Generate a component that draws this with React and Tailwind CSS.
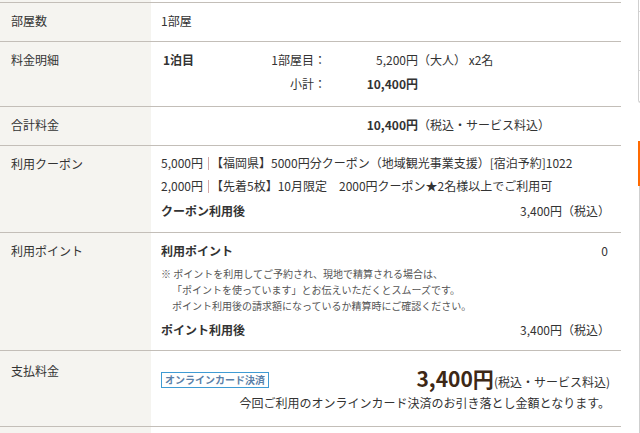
import React from 'react';

const font = { fontFamily: '"Noto Sans CJK JP", "Noto Sans", sans-serif' };

function Row({ label, h, labelPt = 'pt-[10px]', children }) {
  return (
    <div className={`flex border-t border-[#c3beb8] ${h}`}>
      <div className={`w-[151px] shrink-0 bg-[#f5f4f0] pl-[11px] text-[12px] leading-[16px] text-[#333] ${labelPt}`}>
        {label}
      </div>
      <div className="flex-1 pl-[10px] pr-[11px] text-[12px] leading-[16px] text-[#333]">{children}</div>
    </div>
  );
}

function Sep() {
  return <span className="inline-block w-px h-[13px] bg-[#d3a9a9] ml-[5px] mr-[2px] align-[-2px]" />;
}

export default function App() {
  return (
    <div className="flex w-[640px] h-[433px] overflow-hidden bg-white" style={font}>
      {/* main table */}
      <div className="w-[621px] shrink-0">
        <div className="h-[2px] w-[151px] bg-[#f5f4f0]" />

        <Row label="部屋数" h="h-[39px]">
          <div className="pt-[10px]">1部屋</div>
        </Row>

        <Row label="料金明細" h="h-[65px]">
          <div className="flex pt-[10px]">
            <div className="w-[82px] pl-[2px] font-bold">1泊目</div>
            <div className="grid grid-cols-[83px_92px_auto] gap-y-[8px]">
              <div className="text-right">1部屋目：</div>
              <div className="text-right">5,200円</div>
              <div>（大人） x2名</div>
              <div className="text-right">小計：</div>
              <div className="text-right font-bold">10,400円</div>
              <div />
            </div>
          </div>
        </Row>

        <Row label="合計料金" h="h-[39px]">
          <div className="flex pt-[10px]">
            <div className="w-[165px]" />
            <div className="w-[92px] text-right font-bold">10,400円</div>
            <div>（税込・サービス料込）</div>
          </div>
        </Row>

        <Row label="利用クーポン" h="h-[87px]">
          <div className="pt-[9px]">
            <div>
              5,000円<Sep />【福岡県】5000円分クーポン（地域観光事業支援）[宿泊予約]1022
            </div>
            <div className="mt-[7px]">
              2,000円<Sep />【先着5枚】10月限定　2000円クーポン★2名様以上でご利用可
            </div>
            <div className="mt-[9px] flex justify-between">
              <span className="font-bold">クーポン利用後</span>
              <span>3,400円（税込）</span>
            </div>
          </div>
        </Row>

        <Row label="利用ポイント" h="h-[118px]">
          <div className="pt-[10px]">
            <div className="flex justify-between">
              <span className="font-bold">利用ポイント</span>
              <span className="pr-[2px]">0</span>
            </div>
            <div className="mt-[7px] text-[10px] leading-[16px] text-[#555]">
              <div>※ ポイントを利用してご予約され、現地で精算される場合は、</div>
              <div className="pl-[11px]">「ポイントを使っています」とお伝えいただくとスムーズです。</div>
              <div className="pl-[11px]">ポイント利用後の請求額になっているか精算時にご確認ください。</div>
            </div>
            <div className="mt-[8px] flex justify-between">
              <span className="font-bold">ポイント利用後</span>
              <span>3,400円（税込）</span>
            </div>
          </div>
        </Row>

        <Row label="支払料金" h="h-[76px]" labelPt="pt-[12px]">
          <div className="pt-[14px]">
            <div className="flex items-end justify-between">
              <span className="mb-[3px] border border-[#3f9bd3] px-[3px] text-[10px] leading-[14px] font-bold text-[#5a7fa8]">
                オンラインカード決済
              </span>
              <span className="flex items-baseline">
                <span className="text-[21px] leading-[26px] font-bold text-[#3d2816]">3,400円</span>
                <span className="text-[12px]">(税込・サービス料込)</span>
              </span>
            </div>
            <div className="mt-[4px] text-right">今回ご利用のオンラインカード決済のお引き落とし金額となります。</div>
          </div>
        </Row>

        <div className="flex h-[7px] border-t border-[#c3beb8]">
          <div className="w-[151px] bg-[#f5f4f0]" />
        </div>
      </div>

      {/* right side panel edge */}
      <div className="flex-1 pl-[17px] flex flex-col">
        <div className="h-[103px] border-l border-b border-[#cfcfcf] rounded-bl-[4px]">
          <div className="h-[12px] border-b border-[#d8d8d8]" />
          <div className="h-[59px] border-b border-[#d8d8d8]" />
        </div>
        <div className="mt-[38px] h-[45px] w-[3px] bg-[#ff6a00]" />
        <div className="ml-[1px] flex-1 border-l border-[#cfcfcf]">
          <div className="h-[72px] border-b border-[#d8d8d8]" />
          <div className="h-[65px] border-b border-[#d8d8d8]" />
          <div className="h-[62px] border-b border-[#d8d8d8]" />
        </div>
      </div>
    </div>
  );
}
